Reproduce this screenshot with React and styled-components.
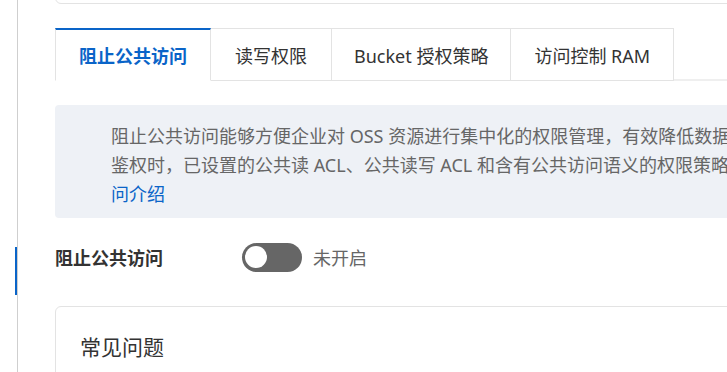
import React from "react";
import styled, { createGlobalStyle } from "styled-components";

const GlobalStyle = createGlobalStyle`
  html, body {
    margin: 0;
    padding: 0;
    background: #ffffff;
    overflow: hidden;
  }
  body {
    font-family: "Noto Sans", "Noto Sans CJK SC", sans-serif;
    color: #333333;
  }
`;

const Page = styled.div`
  display: flex;
  width: 727px;
  height: 372px;
  overflow: hidden;
  background: #fff;
`;

const SideRail = styled.div`
  flex: 0 0 18px;
  box-sizing: border-box;
  border-right: 1px solid #cfcfcf;
  padding-top: 247px;
`;

const RailMarker = styled.div`
  width: 2px;
  height: 48px;
  margin-left: 15px;
  background: #0a64c8;
`;

const Main = styled.div`
  flex: 1;
  min-width: 0;
  padding-left: 37px;
  overflow: hidden;
  display: block;
`;

const TopCard = styled.div`
  box-sizing: border-box;
  height: 24px;
  margin-top: -20px;
  margin-right: -20px;
  border: 1px solid #e3e3e3;
  border-radius: 6px;
`;

const TabBar = styled.div`
  display: flex;
  align-items: flex-end;
  margin-top: 24px;
  margin-right: -20px;
`;

const Tab = styled.div`
  box-sizing: border-box;
  flex-shrink: 0;
  height: 53px;
  padding: 0 ${(p) => p.$pad || 24}px;
  display: flex;
  align-items: center;
  justify-content: center;
  white-space: nowrap;
  font-size: 18px;
  color: ${(p) => (p.$active ? "#0a64c8" : "#333")};
  font-weight: ${(p) => (p.$active ? 700 : 400)};
  background: #fff;
  border-top: ${(p) => (p.$active ? "2px solid #0a64c8" : "1px solid #e3e3e3")};
  border-right: 1px solid #e3e3e3;
  border-left: ${(p) => (p.$first ? "1px solid #e3e3e3" : "none")};
  border-bottom: ${(p) => (p.$active ? "1px solid #fff" : "1px solid #e3e3e3")};
`;

const TabRest = styled.div`
  flex: 1;
  height: 2px;
  background: #efefef;
`;

const InfoBox = styled.div`
  box-sizing: border-box;
  height: 113px;
  margin-top: 24px;
  margin-right: -40px;
  padding: 17px 0 0 56px;
  background: #eef1f6;
  border-radius: 4px;
  font-size: 18px;
  line-height: 29px;
  color: #666;
`;

const InfoLine = styled.div`
  white-space: nowrap;
`;

const Link = styled.a`
  color: #0a64c8;
  text-decoration: none;
`;

const SettingRow = styled.div`
  display: flex;
  align-items: center;
  height: 30px;
  margin-top: 24px;
`;

const SettingLabel = styled.div`
  flex: 0 0 187px;
  font-size: 18px;
  font-weight: 700;
  color: #333;
`;

const Switch = styled.div`
  box-sizing: border-box;
  width: 60px;
  height: 29px;
  border-radius: 15px;
  background: #666;
  display: flex;
  align-items: center;
  padding: 0 3px;
`;

const SwitchKnob = styled.div`
  width: 22px;
  height: 22px;
  border-radius: 50%;
  background: #fff;
`;

const SwitchText = styled.span`
  margin-left: 11px;
  font-size: 18px;
  color: #666;
`;

const FaqCard = styled.div`
  box-sizing: border-box;
  margin-top: 34px;
  margin-right: -20px;
  height: 120px;
  border: 1px solid #e3e3e3;
  border-radius: 6px;
  padding: 25px 0 0 24px;
`;

const FaqTitle = styled.div`
  font-size: 21px;
  line-height: 30px;
  color: #333;
`;

export default function App() {
  return (
    <>
      <GlobalStyle />
      <Page>
        <SideRail>
          <RailMarker />
        </SideRail>
        <Main>
          <TopCard />
          <TabBar>
            <Tab $active $first $pad={23}>阻止公共访问</Tab>
            <Tab>读写权限</Tab>
            <Tab $pad={22}>Bucket 授权策略</Tab>
            <Tab $pad={23}>访问控制 RAM</Tab>
            <TabRest />
          </TabBar>
          <InfoBox>
            <InfoLine>
              阻止公共访问能够方便企业对 OSS 资源进行集中化的权限管理，有效降低数据泄露风险。开启阻止公共访问后，新建公共访问权限的操作将被禁止，在
            </InfoLine>
            <InfoLine>
              鉴权时，已设置的公共读 ACL、公共读写 ACL 和含有公共访问语义的权限策略将失效。详情请参见 <Link href="#">阻止公共访</Link>
            </InfoLine>
            <InfoLine>
              <Link href="#">问介绍</Link>
            </InfoLine>
          </InfoBox>
          <SettingRow>
            <SettingLabel>阻止公共访问</SettingLabel>
            <Switch>
              <SwitchKnob />
            </Switch>
            <SwitchText>未开启</SwitchText>
          </SettingRow>
          <FaqCard>
            <FaqTitle>常见问题</FaqTitle>
          </FaqCard>
        </Main>
      </Page>
    </>
  );
}
